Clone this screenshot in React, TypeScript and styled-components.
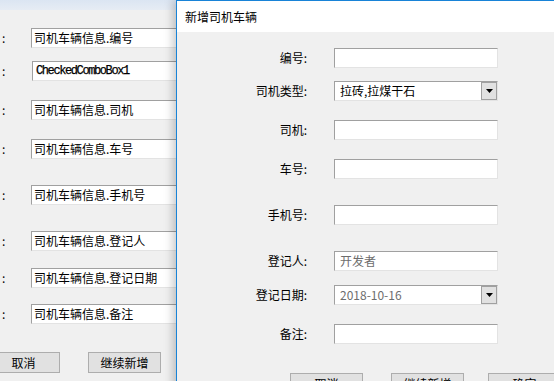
import React from "react";
import styled, { createGlobalStyle } from "styled-components";

const GlobalStyle = createGlobalStyle`
  html, body { margin: 0; padding: 0; background: #f0f0f0; overflow: hidden; }
  body { font-family: "Noto Sans CJK SC", "Microsoft YaHei", sans-serif; font-size: 12px; color: #000; }
`;

const Screen = styled.div`
  position: relative;
  width: 554px;
  height: 381px;
  overflow: hidden;
  background: #f0f0f0;
`;

const BackWindow = styled.div`
  display: flex;
  flex-direction: column;
  width: 100%;
  height: 100%;
`;

const BackTitle = styled.div`
  height: 10px;
  flex: none;
  background: linear-gradient(#dbe5f2, #e6ecf4);
`;

const BackForm = styled.div`
  display: flex;
  flex-direction: column;
  padding-top: 18px;
`;

const Row = styled.div<{ $mt: number }>`
  display: flex;
  align-items: center;
  height: 20px;
  margin-top: ${(p) => p.$mt}px;
`;

const BackLabel = styled.div`
  width: 6px;
  flex: none;
  padding-left: 2px;
  box-sizing: border-box;
  margin-right: 25px;
  line-height: 20px;
`;

const Box = styled.div<{ $w: number; $pl?: number; $dim?: boolean; $shift?: number }>`
  box-sizing: border-box;
  display: flex;
  align-items: center;
  flex: none;
  width: ${(p) => p.$w}px;
  height: 20px;
  margin-left: ${(p) => p.$shift || 0}px;
  padding-left: ${(p) => p.$pl ?? 2}px;
  background: #fff;
  border: 1px solid;
  border-color: #a0a0a0 #e3e3e3 #e3e3e3 #a0a0a0;
  color: ${(p) => (p.$dim ? "#6d6d6d" : "#000")};
  white-space: nowrap;
  overflow: hidden;
  line-height: 18px;
`;

const MonoText = styled.span`
  font-family: "Liberation Mono", "Courier New", monospace;
  font-size: 12px;
  letter-spacing: -1.4px;
  -webkit-text-stroke: 0.25px #000;
`;

const BoxText = styled.span`
  flex: 1;
  overflow: hidden;
`;

const DropButton = styled.div`
  box-sizing: border-box;
  flex: none;
  width: 16px;
  height: 18px;
  background: #e1e1e1;
  border: 1px solid #a0a0a0;
  display: flex;
  align-items: center;
  justify-content: center;
`;

const ButtonRow = styled.div<{ $mt: number; $ml: number }>`
  display: flex;
  margin-top: ${(p) => p.$mt}px;
  margin-left: ${(p) => p.$ml}px;
`;

const Button = styled.div<{ $ml?: number }>`
  box-sizing: border-box;
  flex: none;
  width: 73px;
  height: 21px;
  margin-left: ${(p) => p.$ml || 0}px;
  background: #e1e1e1;
  border: 1px solid #adadad;
  display: flex;
  align-items: center;
  justify-content: center;
  line-height: 18px;
`;

const Dialog = styled.div`
  position: absolute;
  left: 176px;
  top: 0;
  width: 400px;
  height: 400px;
  box-sizing: border-box;
  border-left: 1px solid #1883d7;
  border-top: 1px solid #1883d7;
  background: #f0f0f0;
  box-shadow: -3px 0 9px rgba(0, 0, 0, 0.22);
  display: flex;
  flex-direction: column;
`;

const DialogTitle = styled.div`
  height: 31px;
  flex: none;
  background: #fff;
  padding-left: 8px;
  line-height: 31px;
`;

const DialogBody = styled.div`
  display: flex;
  flex-direction: column;
  padding-top: 16px;
`;

const FieldLabel = styled.div`
  width: 130px;
  flex: none;
  text-align: right;
  margin-right: 27px;
  white-space: nowrap;
  line-height: 20px;
`;

const Caret = () => (
  <svg width="7" height="4" viewBox="0 0 7 4">
    <path d="M0 0H7L3.5 4Z" fill="#000" />
  </svg>
);

const backRows: { value: string; mt: number; mono?: boolean }[] = [
  { value: "司机车辆信息.编号", mt: 0 },
  { value: "CheckedComboBox1", mt: 13, mono: true },
  { value: "司机车辆信息.司机", mt: 19 },
  { value: "司机车辆信息.车号", mt: 19 },
  { value: "司机车辆信息.手机号", mt: 26 },
  { value: "司机车辆信息.登记人", mt: 26 },
  { value: "司机车辆信息.登记日期", mt: 17 },
  { value: "司机车辆信息.备注", mt: 16 },
];

type Kind = "text" | "combo" | "date";
const dialogRows: { label: string; value?: string; mt: number; kind: Kind; dim?: boolean }[] = [
  { label: "编号:", mt: 0, kind: "text" },
  { label: "司机类型:", value: "拉砖,拉煤干石", mt: 13, kind: "combo" },
  { label: "司机:", mt: 19, kind: "text" },
  { label: "车号:", mt: 19, kind: "text" },
  { label: "手机号:", mt: 26, kind: "text" },
  { label: "登记人:", value: "开发者", mt: 26, kind: "text", dim: true },
  { label: "登记日期:", value: "2018-10-16", mt: 14, kind: "date", dim: true },
  { label: "备注:", mt: 19, kind: "text" },
];

export default function App() {
  return (
    <Screen>
      <GlobalStyle />
      <BackWindow>
        <BackTitle />
        <BackForm>
          {backRows.map((r) => (
            <Row key={r.value} $mt={r.mt}>
              <BackLabel>:</BackLabel>
              <Box $w={200} $pl={r.mono ? 3 : 2} $shift={r.mono ? 1 : 0}>
                {r.mono ? <MonoText>{r.value}</MonoText> : <BoxText>{r.value}</BoxText>}
              </Box>
            </Row>
          ))}
          <ButtonRow $mt={28} $ml={-13}>
            <Button>取消</Button>
            <Button $ml={28}>继续新增</Button>
          </ButtonRow>
        </BackForm>
      </BackWindow>
      <Dialog>
        <DialogTitle>新增司机车辆</DialogTitle>
        <DialogBody>
          {dialogRows.map((r) => (
            <Row key={r.label} $mt={r.mt}>
              <FieldLabel>{r.label}</FieldLabel>
              <Box $w={164} $pl={5} $dim={r.dim}>
                <BoxText>{r.value}</BoxText>
                {r.kind !== "text" && (
                  <DropButton>
                    <Caret />
                  </DropButton>
                )}
              </Box>
            </Row>
          ))}
          <ButtonRow $mt={29} $ml={113}>
            <Button>取消</Button>
            <Button $ml={28}>继续新增</Button>
            <Button $ml={24}>确定</Button>
          </ButtonRow>
        </DialogBody>
      </Dialog>
    </Screen>
  );
}
